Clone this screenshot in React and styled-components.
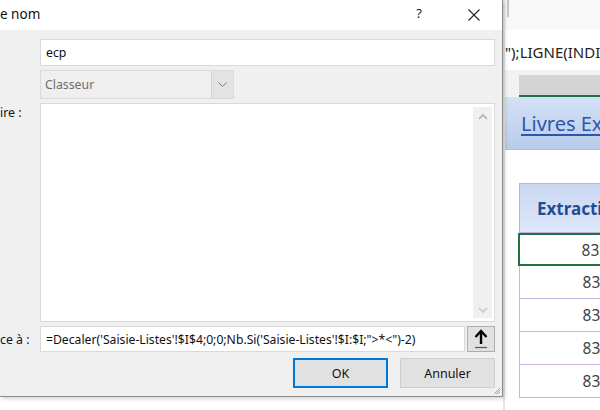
import React from "react";
import styled, { createGlobalStyle } from "styled-components";

const Global = createGlobalStyle`
  html, body { margin: 0; padding: 0; background: #ffffff; }
  body { width: 600px; height: 410px; overflow: hidden; font-family: "Noto Sans", "Open Sans", sans-serif; }
`;

const Screen = styled.div`
  display: flex;
  width: 600px;
  height: 410px;
  overflow: hidden;
  background: #ffffff;
`;

const DialogColumn = styled.div`
  width: 503px;
  flex: none;
  display: flex;
  flex-direction: column;
`;

const Dialog = styled.div`
  height: 397px;
  display: flex;
  flex-direction: column;
  border-right: 1px solid #8c8c8c;
  border-bottom: 1px solid #8c8c8c;
  box-sizing: border-box;
  box-shadow: 2px 2px 4px rgba(0,0,0,0.16);
  position: relative;
  z-index: 2;
`;

const TitleBar = styled.div`
  height: 30px;
  flex: none;
  background: #ffffff;
  display: flex;
  align-items: center;
  font-size: 13.5px;
  color: #111;
  padding-right: 14px;
`;

const Title = styled.span`
  flex: 1;
  margin-top: -3px;
`;

const TitleButton = styled.span`
  width: ${p => p.w}px;
  margin-left: ${p => p.ml || 0}px;
  display: flex;
  justify-content: center;
  font-size: 13px;
  color: #222;
  margin-top: -4px;
`;

const Body = styled.div`
  flex: 1;
  background: #f0f0f0;
  display: grid;
  grid-template-columns: 40px 455px;
  grid-template-rows: 27px 29px 219px 26px 30px;
  row-gap: 4px;
  padding-top: 9px;
  position: relative;
`;

const Label = styled.div`
  font-size: 12.3px;
  color: #111;
  white-space: nowrap;
  align-self: ${p => p.center ? "center" : "start"};
  padding-top: ${p => p.center ? 0 : 1}px;
`;

const TextBox = styled.div`
  background: #ffffff;
  border: 1px solid #d9d9d9;
  box-sizing: border-box;
  display: flex;
  align-items: center;
  padding-left: 5px;
  font-size: 12.3px;
  color: #111;
  white-space: nowrap;
  overflow: hidden;
`;

const Combo = styled.div`
  width: 194px;
  display: flex;
  border: 1px solid #dadada;
  box-sizing: border-box;
  background: #efefef;
`;

const ComboText = styled.div`
  flex: 1;
  display: flex;
  align-items: center;
  padding-left: 4px;
  font-size: 12.3px;
  color: #6d6d6d;
`;

const ComboButton = styled.div`
  width: 21px;
  background: #e3e3e3;
  border-left: 1px solid #d4d4d4;
  display: flex;
  align-items: center;
  justify-content: center;
`;

const TextArea = styled.div`
  background: #ffffff;
  border: 1px solid #d9d9d9;
  box-sizing: border-box;
  display: flex;
  justify-content: flex-end;
  padding: 3px 2px 3px 0;
`;

const ScrollBar = styled.div`
  width: 19px;
  background: #f0f0f0;
  display: flex;
  flex-direction: column;
  justify-content: space-between;
  align-items: center;
  padding: 6px 0 4px;
`;

const RefRow = styled.div`
  display: flex;
  gap: 2px;
`;

const RefBox = styled(TextBox)`
  flex: 1;
  font-size: 12.2px;
`;

const CollapseButton = styled.div`
  width: 28px;
  background: #e1e1e1;
  border: 1px solid #adadad;
  box-sizing: border-box;
  display: flex;
  align-items: center;
  justify-content: center;
`;

const ButtonRow = styled.div`
  display: flex;
  justify-content: flex-end;
  gap: 12px;
  padding-top: 2px;
`;

const Button = styled.div`
  width: 95px;
  height: 30px;
  box-sizing: border-box;
  background: #e1e1e1;
  border: ${p => p.primary ? "2px solid #0078d7" : "1px solid #cfcfcf"};
  display: flex;
  align-items: center;
  justify-content: center;
  font-size: 12.5px;
  color: #111;
`;

const Grip = styled.svg`
  position: absolute;
  right: 1px;
  bottom: 1px;
`;

const BelowDialog = styled.div`
  flex: 1;
  background: #ffffff;
`;

/* Excel side */
const Excel = styled.div`
  width: 125px;
  flex: none;
  display: flex;
  flex-direction: column;
  background: #ffffff;
  border-left: 2px solid #e6e6e6;
`;

const Ribbon = styled.div`
  height: 30px;
  flex: none;
  background: #f8f8f8;
  box-sizing: border-box;
  padding-left: 2px;
`;

const RibbonSep = styled.div`
  width: 2px;
  height: 17px;
  background: #c6c6c6;
`;

const FormulaBar = styled.div`
  height: 40px;
  flex: none;
  background: #ffffff;
  display: flex;
  align-items: center;
  font-size: 15px;
  color: #222;
  white-space: nowrap;
  overflow: hidden;
  padding-top: 4px;
  box-sizing: border-box;
`;

const HeaderStrip = styled.div`
  height: 27px;
  flex: none;
  background: #f2f2f2;
  display: flex;
  align-items: flex-end;
  padding-left: 14px;
`;

const ColHeader = styled.div`
  flex: 1;
  height: 22px;
  background: #d4d4d4;
  border-bottom: 2px solid #217346;
  box-sizing: border-box;
`;

const Banner = styled.div`
  height: 53px;
  flex: none;
  background: linear-gradient(180deg, #d3e0f5 0%, #c4d5f0 60%, #b7cbea 100%);
  display: flex;
  align-items: center;
  padding-left: 16px;
  border-bottom: 1px solid #a9bfe2;
  box-sizing: border-box;
`;

const BannerLink = styled.span`
  font-size: 20px;
  color: #2f57a8;
  text-decoration: underline;
  text-underline-offset: 3px;
  white-space: nowrap;
`;

const Table = styled.div`
  margin-top: 33px;
  margin-left: 14px;
  width: 103px;
  display: flex;
  flex-direction: column;
`;

const TableHead = styled.div`
  height: 50px;
  background: linear-gradient(180deg, #c9d7f1 0%, #d6e1f6 60%, #dfe7f8 100%);
  border: 1px solid #c3aee0;
  border-right: none;
  box-sizing: border-box;
  display: flex;
  align-items: center;
  padding-left: 17px;
  font-weight: 700;
  font-size: 17px;
  color: #1f4e96;
  white-space: nowrap;
  overflow: hidden;
`;

const Cell = styled.div`
  height: 33px;
  box-sizing: border-box;
  border: ${p => p.selected ? "2px solid #217346" : "1px solid #c9b3e3"};
  border-top: ${p => p.selected ? "2px solid #217346" : "none"};
  display: flex;
  align-items: center;
  justify-content: flex-end;
  font-size: 15.5px;
  color: #444;
  margin-left: ${p => p.selected ? -1 : 0}px;
  padding-right: 3px;
  white-space: nowrap;
`;

export default function App() {
  const formula = `=Decaler('Saisie-Listes'!$I$4;0;0;Nb.Si('Saisie-Listes'!$I:$I;">*<")-2)`;
  return (
    <>
      <Global />
      <Screen>
        <DialogColumn>
          <Dialog>
            <TitleBar>
              <Title>e nom</Title>
              <TitleButton w={30}>?</TitleButton>
              <TitleButton w={28} ml={26}>
                <svg width="12" height="12" viewBox="0 0 12 12" style={{ marginTop: 3 }}>
                  <path d="M0.5 0.5 L11.5 11.5 M11.5 0.5 L0.5 11.5" stroke="#222" strokeWidth="1.1" fill="none" />
                </svg>
              </TitleButton>
            </TitleBar>
            <Body>
              <div />
              <TextBox>ecp</TextBox>
              <div />
              <Combo>
                <ComboText>Classeur</ComboText>
                <ComboButton>
                  <svg width="9" height="6" viewBox="0 0 9 6">
                    <path d="M0.5 0.5 L4.5 4.5 L8.5 0.5" stroke="#7a7a7a" strokeWidth="1" fill="none" />
                  </svg>
                </ComboButton>
              </Combo>
              <Label>ire :</Label>
              <TextArea>
                <ScrollBar>
                  <svg width="10" height="7" viewBox="0 0 10 7">
                    <path d="M1 6 L5 2 L9 6" stroke="#b0b0b0" strokeWidth="1.6" fill="none" />
                  </svg>
                  <svg width="10" height="7" viewBox="0 0 10 7">
                    <path d="M1 1 L5 5 L9 1" stroke="#c8c8c8" strokeWidth="1.6" fill="none" />
                  </svg>
                </ScrollBar>
              </TextArea>
              <Label center>ce à :</Label>
              <RefRow>
                <RefBox>{formula}</RefBox>
                <CollapseButton>
                  <svg width="14" height="20" viewBox="0 0 14 20">
                    <path d="M7 2 L7 15" stroke="#000" strokeWidth="2.4" fill="none" />
                    <path d="M1.5 8 L7 2 L12.5 8" stroke="#000" strokeWidth="2.4" fill="none" />
                    <path d="M1 18.5 L13 18.5" stroke="#555" strokeWidth="1.2" />
                  </svg>
                </CollapseButton>
              </RefRow>
              <div />
              <ButtonRow>
                <Button primary>OK</Button>
                <Button>Annuler</Button>
              </ButtonRow>
              <Grip width="8" height="8" viewBox="0 0 8 8">
                <path d="M7 1 L1 7 M7 3 L3 7 M7 5 L5 7" stroke="#a8a8a8" strokeWidth="1" />
              </Grip>
            </Body>
          </Dialog>
          <BelowDialog />
        </DialogColumn>
        <Excel>
          <Ribbon>
            <RibbonSep />
          </Ribbon>
          <FormulaBar>");LIGNE(INDIRECT</FormulaBar>
          <HeaderStrip>
            <ColHeader />
          </HeaderStrip>
          <Banner>
            <BannerLink>Livres Excel</BannerLink>
          </Banner>
          <Table>
            <TableHead>Extraction</TableHead>
            <Cell selected>8310</Cell>
            <Cell>8311</Cell>
            <Cell>8312</Cell>
            <Cell>8313</Cell>
            <Cell>8314</Cell>
          </Table>
        </Excel>
      </Screen>
    </>
  );
}
